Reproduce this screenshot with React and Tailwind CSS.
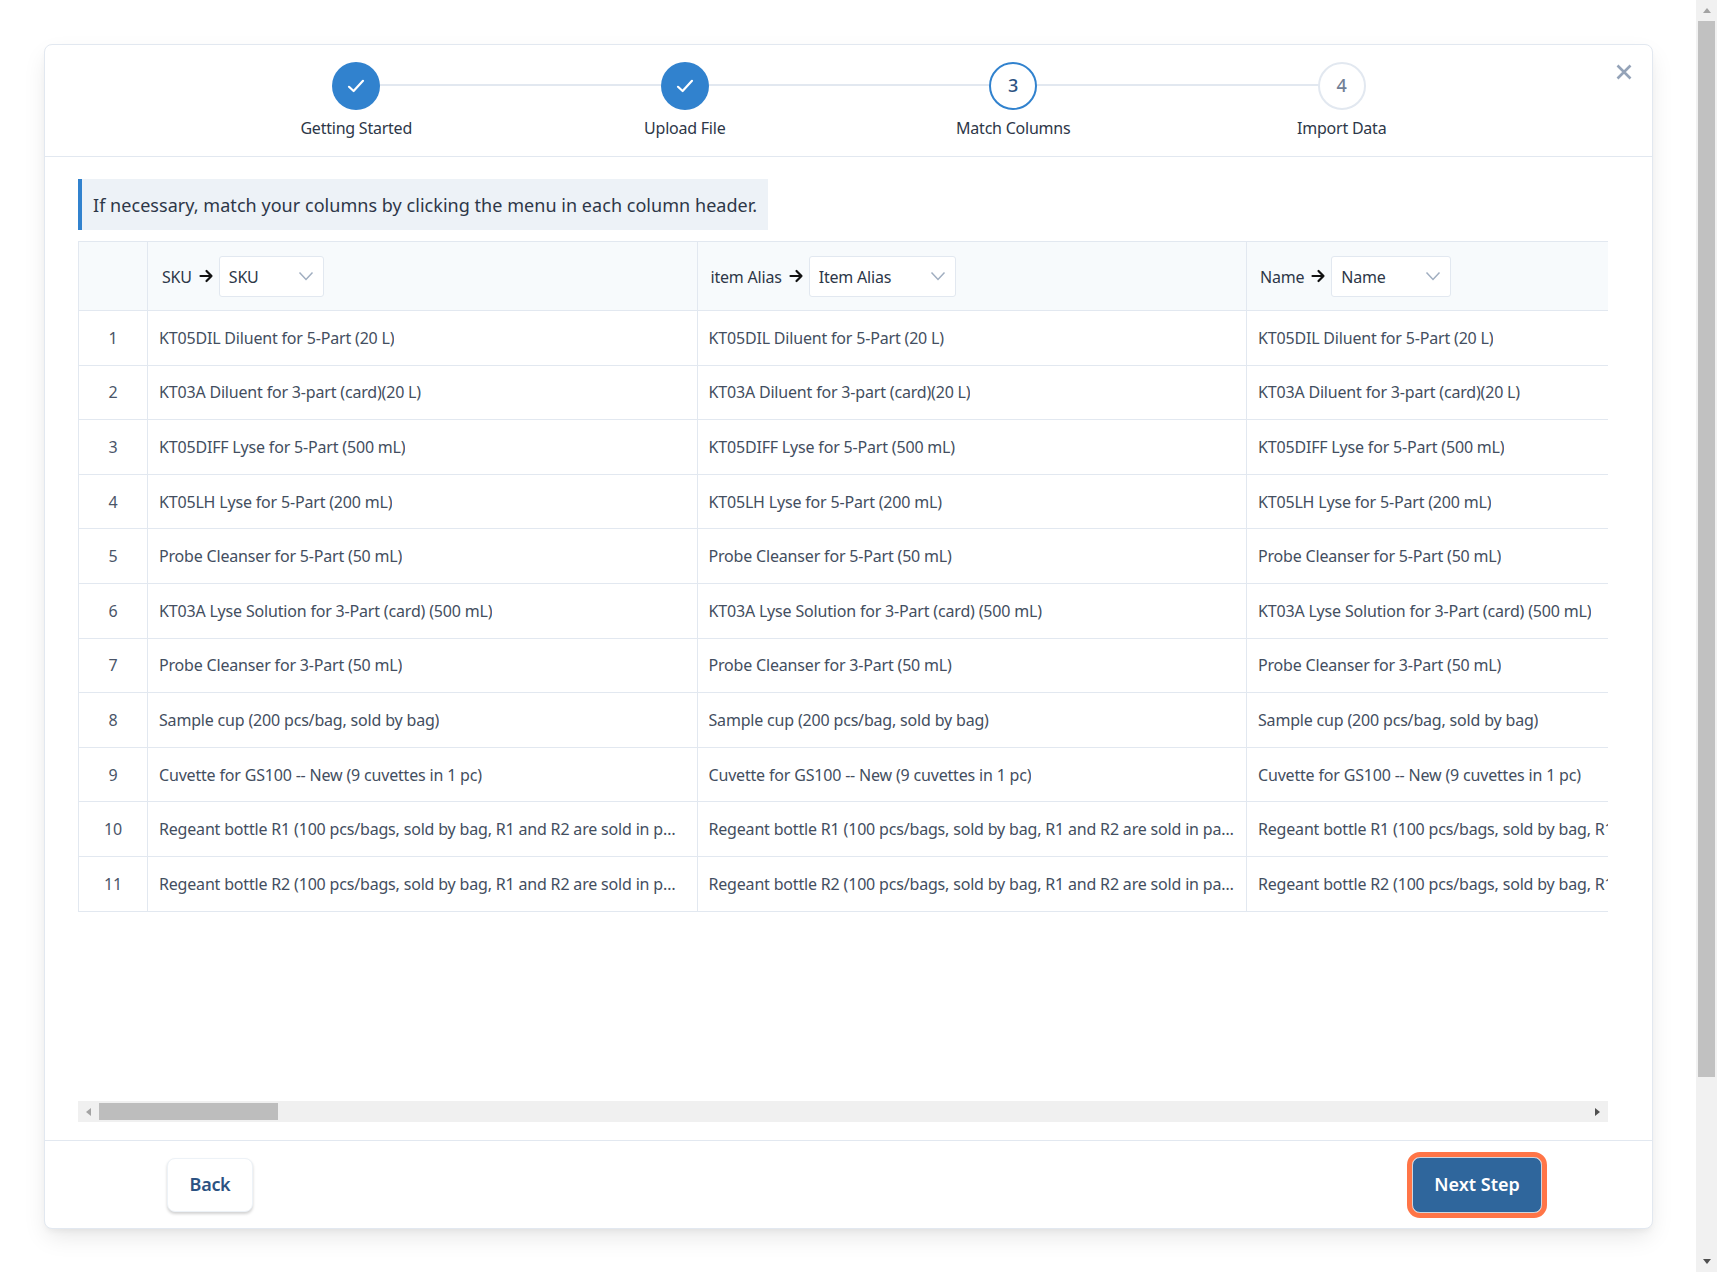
const rows = [
  "KT05DIL Diluent for 5-Part (20 L)",
  "KT03A Diluent for 3-part (card)(20 L)",
  "KT05DIFF Lyse for 5-Part (500 mL)",
  "KT05LH Lyse for 5-Part (200 mL)",
  "Probe Cleanser for 5-Part (50 mL)",
  "KT03A Lyse Solution for 3-Part (card) (500 mL)",
  "Probe Cleanser for 3-Part (50 mL)",
  "Sample cup (200 pcs/bag, sold by bag)",
  "Cuvette for GS100 -- New (9 cuvettes in 1 pc)",
  "Regeant bottle R1 (100 pcs/bags, sold by bag, R1 and R2 are sold in pairs)",
  "Regeant bottle R2 (100 pcs/bags, sold by bag, R1 and R2 are sold in pairs)",
];

function Check() {
  return (
    <svg width="18" height="18" viewBox="0 0 18 18" fill="none" stroke="#fff" strokeWidth="2.2" strokeLinecap="round" strokeLinejoin="round">
      <path d="M2 9.8 6.6 14 16 3.8" />
    </svg>
  );
}

function Step({ label, state, n }) {
  const circle =
    state === "done"
      ? "bg-[#3182ce] text-white"
      : state === "active"
      ? "bg-white border-2 border-[#3182ce] pb-[2px] text-[#2c5282]"
      : "bg-white border-2 border-[#e2e8f0] pb-[2px] text-[#718096]";
  return (
    <div className="relative z-10 flex w-[328.5px] flex-col items-center">
      <div className={`flex h-[48px] w-[48px] items-center justify-center rounded-full text-[18px] font-medium ${circle}`}>
        {state === "done" ? <Check /> : n}
      </div>
      <div className="mt-[6px] text-[16px] leading-[24px] tracking-[-0.23px] text-[#2d3748]">{label}</div>
    </div>
  );
}

function Arrow() {
  return (
    <svg width="16" height="16" viewBox="0 0 16 16" fill="none" stroke="#111" strokeWidth="2.2" strokeLinecap="round" strokeLinejoin="round" className="ml-[6px] mr-[5px] shrink-0">
      <path d="M2.5 8h11M8.5 3l5 5-5 5" />
    </svg>
  );
}

function Head({ label, width, pad }) {
  return (
    <div className={`flex h-[68px] items-center border-l border-[#e2e8f0] bg-[#f7fafc] text-[16px] tracking-[-0.2px] text-[#2d3748] ${pad}`}>
      <span className="mt-[2px]">{label}</span>
      <Arrow />
      <div className={`flex h-[41px] items-center justify-between rounded-[3px] border border-[#e2e8f0] bg-white pl-[9px] pr-[9px] ${width}`}>
        <span className="mt-[2px]">{label === "item Alias" ? "Item Alias" : label}</span>
        <svg width="16" height="16" viewBox="0 0 16 16" fill="none" stroke="#a0aec0" strokeWidth="1.5">
          <path d="M1.5 4.5 8 11.5l6.5-7" />
        </svg>
      </div>
    </div>
  );
}

export default function App() {
  return (
    <div className="flex h-[1272px] w-[1717px] overflow-hidden bg-white text-[#2d3748] [font-family:'Noto_Sans',sans-serif]">
      <div className="min-w-0 flex-1 pl-[44px] pr-[43px] pt-[44px]">
        <div className="relative flex h-[1185px] flex-col rounded-[8px] border border-[#e2e8f0] bg-white shadow-[0_10px_25px_-3px_rgba(0,0,0,0.1),0_4px_6px_-2px_rgba(0,0,0,0.05)]">
          <div className="relative flex h-[112px] shrink-0 justify-start border-b border-[#e2e8f0] pl-[147px] pt-[17px]">
            <div className="absolute left-[311px] top-[39px] h-[2px] w-[986px] bg-[#e2e8f0]" />
            <Step label="Getting Started" state="done" />
            <Step label="Upload File" state="done" />
            <Step label="Match Columns" state="active" n="3" />
            <Step label="Import Data" state="todo" n="4" />
            <button className="absolute right-[19px] top-[18px] text-[#94a3b8]">
              <svg width="18" height="18" viewBox="0 0 18 18" fill="none" stroke="currentColor" strokeWidth="2.6" className="block">
                <path d="M2.5 2.5 15.5 15.5M15.5 2.5 2.5 15.5" />
              </svg>
            </button>
          </div>
          <div className="flex min-h-0 flex-1 flex-col pl-[33px] pr-[44px]">
            <div className="mt-[22px] flex h-[51px] w-[690px] items-center border-l-4 border-[#3182ce] bg-[#edf2f7] pl-[11px] pt-[2px] text-[18px] tracking-[0.04px] text-[#2d3748]">
              If necessary, match your columns by clicking the menu in each column header.
            </div>
            <div className="mt-[11px] flex-1 overflow-hidden">
              <div className="grid w-[1720px] grid-cols-[68px_549.5px_549.5px_550px] border-l border-t border-[#e2e8f0]">
                <div className="h-[69px] border-b border-[#e2e8f0] bg-[#f7fafc]" />
                <div className="border-b border-[#e2e8f0]"><Head label="SKU" width="w-[105px]" pad="pl-[14px]" /></div>
                <div className="border-b border-[#e2e8f0]"><Head label="item Alias" width="w-[147px]" pad="pl-[13px]" /></div>
                <div className="border-b border-[#e2e8f0]"><Head label="Name" width="w-[120px]" pad="pl-[13px]" /></div>
                {rows.map((t, i) => (
                  <div key={i} className="contents">
                    <div className="flex h-[54.6px] items-center justify-center border-b border-[#e2e8f0] text-[16px] tracking-[-0.2px] text-[#4a5568]">{i + 1}</div>
                    {[0, 1, 2].map((c) => (
                      <div key={c} className={`flex h-[54.6px] min-w-0 items-center border-b border-l border-[#e2e8f0] pl-[11px] text-[16px] tracking-[-0.18px] text-[#434e60] ${c === 0 ? "pr-[18px]" : "pr-[11px]"}`}>
                        <span className="truncate">{t}</span>
                      </div>
                    ))}
                  </div>
                ))}
              </div>
            </div>
            <div className="mb-[18px] flex h-[21px] shrink-0 items-center bg-[#f0f0f0]">
              <div className="flex w-[21px] justify-center">
                <div className="h-0 w-0 border-y-[4px] border-r-[5px] border-y-transparent border-r-[#a3a3a3]" />
              </div>
              <div className="h-[17px] w-[179px] bg-[#bdbdbd]" />
              <div className="flex-1" />
              <div className="flex w-[21px] justify-center">
                <div className="h-0 w-0 border-y-[4px] border-l-[5px] border-y-transparent border-l-[#505050]" />
              </div>
            </div>
          </div>
          <div className="flex h-[88px] shrink-0 items-center justify-between border-t border-[#e2e8f0] pl-[122px] pr-[110px]">
            <button className="h-[54px] w-[86px] rounded-[8px] border border-[#edf2f7] bg-white text-[18px] font-semibold tracking-[-0.3px] text-[#2c5282] shadow-[0_2px_3px_rgba(0,0,0,0.18)]">Back</button>
            <button className="h-[56px] w-[130px] rounded-[8px] border border-[#cbd5e0] bg-[#2f669c] text-[18px] font-semibold text-white outline-[5px] outline-[#ff7547]">Next Step</button>
          </div>
        </div>
      </div>
      <div className="flex w-[21px] shrink-0 flex-col items-center bg-[#f1f1f1]">
        <div className="flex h-[21px] items-center justify-center">
          <div className="h-0 w-0 border-x-[4px] border-b-[5px] border-x-transparent border-b-[#a3a3a3]" />
        </div>
        <div className="h-[1056px] w-[17px] bg-[#c1c1c1]" />
        <div className="flex-1" />
        <div className="flex h-[21px] items-center justify-center">
          <div className="h-0 w-0 border-x-[4px] border-t-[5px] border-x-transparent border-t-[#505050]" />
        </div>
      </div>
    </div>
  );
}
